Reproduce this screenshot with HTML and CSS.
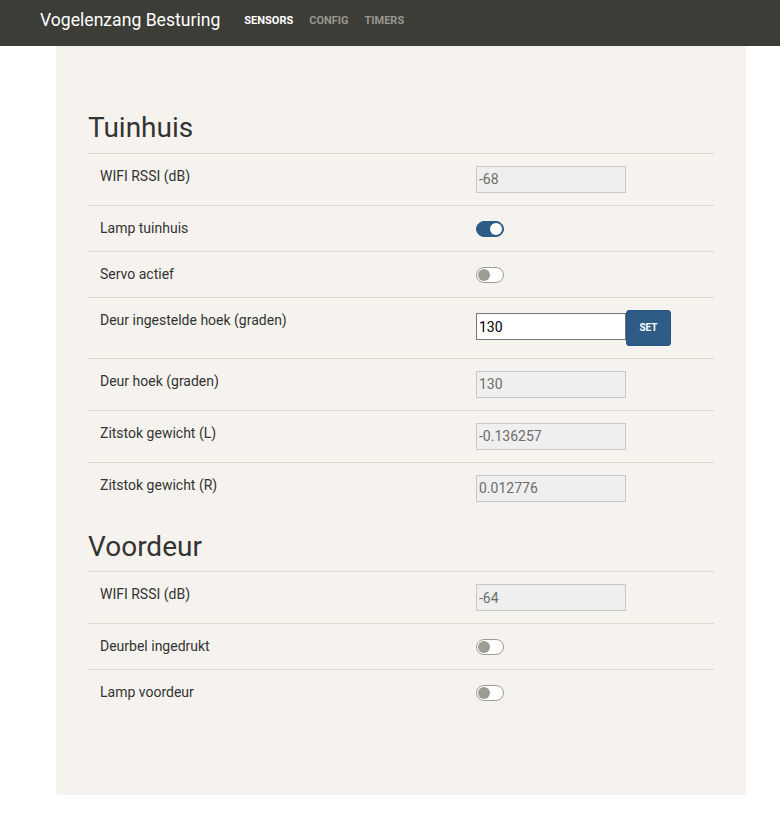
FILE: index.html
```html
<!DOCTYPE html>
<html lang="nl">
<head>
<meta charset="utf-8">
<title>Vogelenzang Besturing</title>
<link rel="stylesheet" href="styles.css">
</head>
<body>
<nav class="navbar">
  <span class="brand">Vogelenzang Besturing</span>
  <ul class="nav">
    <li class="nav-link active">Sensors</li>
    <li class="nav-link">Config</li>
    <li class="nav-link">Timers</li>
  </ul>
</nav>
<main class="card">
  <h3 class="section-title">Tuinhuis</h3>
  <table class="sensor-table">
    <tr><td class="label">WIFI RSSI (dB)</td><td><input class="field ro" value="-68" disabled></td></tr>
    <tr><td class="label">Lamp tuinhuis</td><td><span class="toggle on"></span></td></tr>
    <tr><td class="label">Servo actief</td><td><span class="toggle"></span></td></tr>
    <tr class="set-row"><td class="label">Deur ingestelde hoek (graden)</td><td><div class="set-group"><input class="field edit" value="130"><button class="btn-set">SET</button></div></td></tr>
    <tr><td class="label">Deur hoek (graden)</td><td><input class="field ro" value="130" disabled></td></tr>
    <tr><td class="label">Zitstok gewicht (L)</td><td><input class="field ro" value="-0.136257" disabled></td></tr>
    <tr><td class="label">Zitstok gewicht (R)</td><td><input class="field ro" value="0.012776" disabled></td></tr>
  </table>
  <h3 class="section-title">Voordeur</h3>
  <table class="sensor-table">
    <tr><td class="label">WIFI RSSI (dB)</td><td><input class="field ro" value="-64" disabled></td></tr>
    <tr><td class="label">Deurbel ingedrukt</td><td><span class="toggle"></span></td></tr>
    <tr><td class="label">Lamp voordeur</td><td><span class="toggle"></span></td></tr>
  </table>
</main>
</body>
</html>
```
FILE: styles.css
```css
* { box-sizing: border-box; }
html, body { margin: 0; padding: 0; }
body {
  font-family: Roboto, "Liberation Sans", sans-serif;
  font-size: 14px;
  line-height: 1.5;
  color: #333;
  background: #fff;
}
.navbar {
  height: 46px;
  background: #3d3d37;
  display: flex;
  align-items: center;
  padding-left: 40px;
}
.brand {
  color: #fff;
  font-size: 17.6px;
  margin-right: 24px;
  line-height: 1;
  position: relative;
  top: -2px;
}
.nav {
  list-style: none;
  margin: 0;
  padding: 0;
  display: flex;
  gap: 16px;
  position: relative;
  top: -3px;
}
.nav-link {
  font-size: 11px;
  font-weight: 700;
  text-transform: uppercase;
  color: #98968f;
  line-height: 1;
}
.nav-link.active { color: #fff; }
.card {
  margin-left: 56px;
  width: 690px;
  background: #f6f3ee;
  border-radius: 0 0 4px 4px;
  padding: 65px 32px 64px;
}
.section-title {
  font-size: 28px;
  font-weight: 400;
  line-height: 1.2;
  margin: 0 0 8px;
  color: #333;
}
.sensor-table {
  width: 100%;
  border-collapse: collapse;
  margin-bottom: 16px;
}
.sensor-table td {
  border-top: 1px solid #dcd7cc;
  padding: 12px;
  vertical-align: top;
}
.sensor-table td.label { width: 388px; }
.sensor-table td + td { padding-left: 0; }
.field {
  width: 150px;
  height: 27px;
  font-family: Roboto, "Liberation Sans", sans-serif;
  font-size: 14px;
  padding: 0 2px;
  display: block;
}
.field.ro {
  background: #efefef;
  border: 1px solid #c8c8c8;
  color: #6d6d6d;
}
.field.edit {
  background: #fff;
  border: 1px solid #767676;
  color: #000;
}
.set-group {
  display: flex;
  align-items: center;
}
.set-group .field { margin-top: -2px; }
.btn-set {
  width: 45px;
  height: 36px;
  background: #2f5b87;
  color: #fff;
  border: 1px solid #2a5480;
  border-radius: 3px;
  font-family: Roboto, "Liberation Sans", sans-serif;
  font-size: 10px;
  font-weight: 700;
  padding: 0;
}
.toggle {
  display: block;
  width: 28px;
  height: 16px;
  border-radius: 8px;
  border: 1px solid #9e9d95;
  background: #fff;
  position: relative;
  margin-top: 3px;
}
.toggle::after {
  content: "";
  position: absolute;
  left: 1px;
  top: 1px;
  width: 12px;
  height: 12px;
  border-radius: 50%;
  background: #9e9d95;
}
.toggle.on {
  background: #2f5b87;
  border-color: #2f5b87;
}
.toggle.on::after {
  left: auto;
  right: 1px;
  background: #fff;
}
```
